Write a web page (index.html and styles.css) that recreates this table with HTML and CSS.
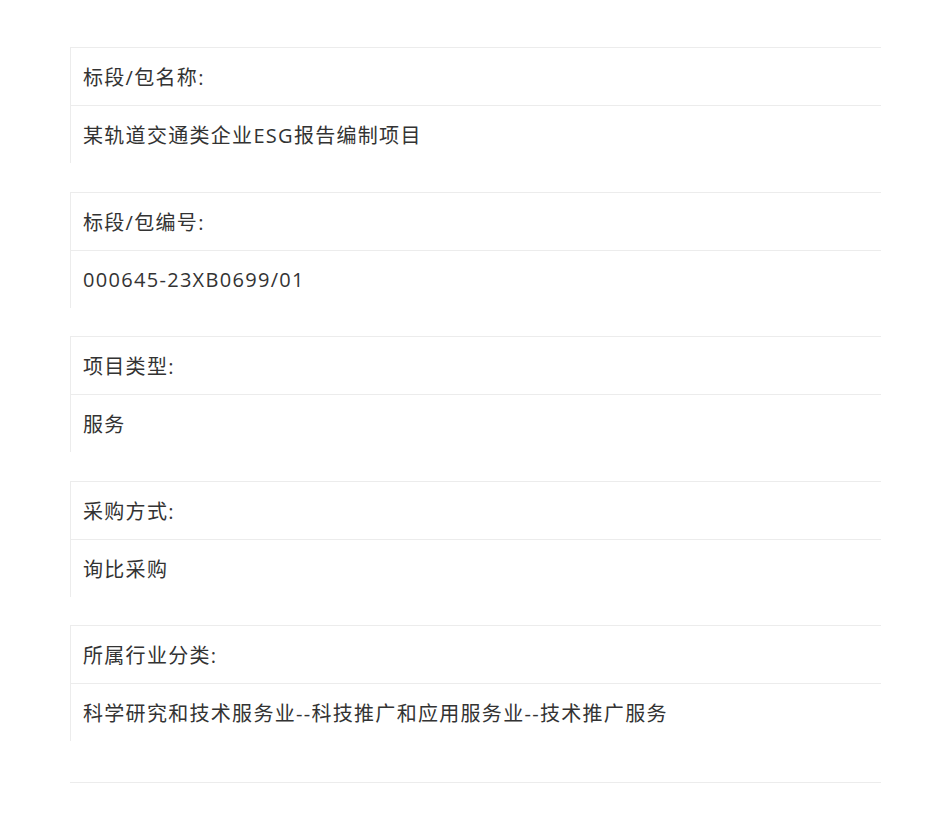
FILE: index.html
```html
<!DOCTYPE html>
<html lang="zh-CN">
<head>
<meta charset="utf-8">
<title>项目信息</title>
<link rel="stylesheet" href="styles.css">
</head>
<body>
<div class="page">
  <div class="field">
    <div class="label">标段/包名称:</div>
    <div class="value">某轨道交通类企业ESG报告编制项目</div>
  </div>
  <div class="field">
    <div class="label">标段/包编号:</div>
    <div class="value">000645-23XB0699/01</div>
  </div>
  <div class="field">
    <div class="label">项目类型:</div>
    <div class="value">服务</div>
  </div>
  <div class="field">
    <div class="label">采购方式:</div>
    <div class="value">询比采购</div>
  </div>
  <div class="field">
    <div class="label">所属行业分类:</div>
    <div class="value">科学研究和技术服务业--科技推广和应用服务业--技术推广服务</div>
  </div>
  <div class="divider"></div>
</div>
</body>
</html>
```
FILE: styles.css
```css
html, body {
  margin: 0;
  padding: 0;
  background: #ffffff;
}
.page {
  padding: 47px 0 0 70px;
  width: 811px;
  font-family: "Open Sans", "Noto Sans CJK SC", sans-serif;
  font-size: 20px;
  letter-spacing: 1.3px;
  color: #333333;
}
.field {
  border-top: 1px solid #ececec;
  border-left: 1px solid #ececec;
  margin-bottom: 28.5px;
}
.label,
.value {
  height: 57px;
  display: flex;
  align-items: center;
  padding-left: 12px;
  white-space: nowrap;
}
.label {
  border-bottom: 1px solid #ececec;
}
.divider {
  margin-top: 41px;
  border-top: 1px solid #ececec;
}
```
